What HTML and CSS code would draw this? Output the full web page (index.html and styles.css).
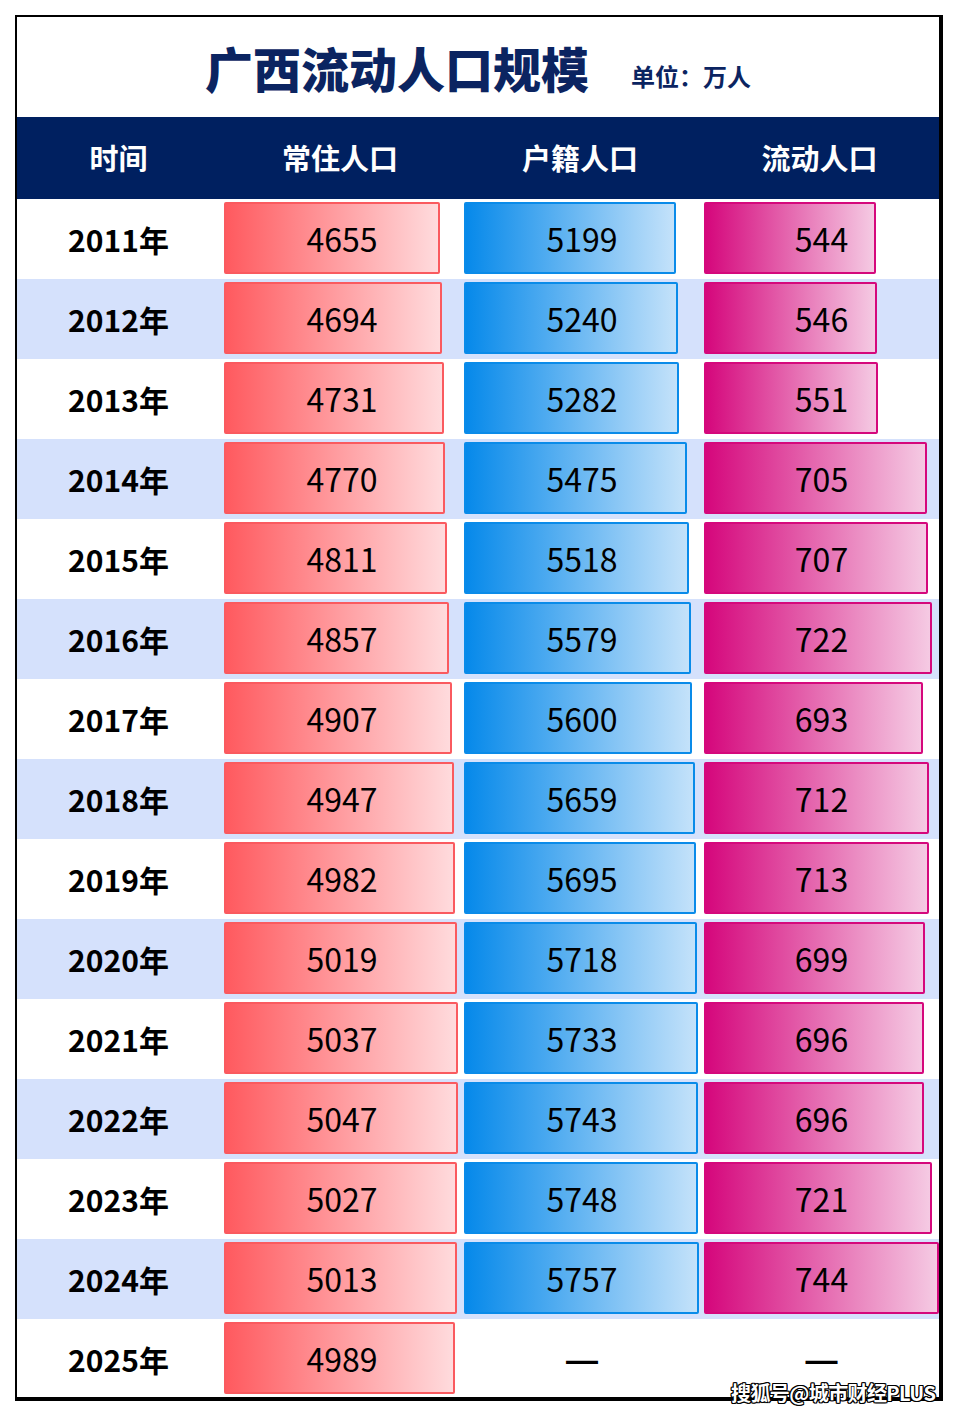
FILE: index.html
```html
<!DOCTYPE html>
<html lang="zh-CN">
<head>
<meta charset="utf-8">
<title>广西流动人口规模</title>
<link rel="stylesheet" href="styles.css">
</head>
<body>
<div class="page">
  <div class="frame">
    <div class="title-bar">
      <h1 class="title">广西流动人口规模</h1>
      <span class="unit">单位：万人</span>
    </div>
    <div class="row head">
      <div class="hcell">时间</div>
      <div class="hcell">常住人口</div>
      <div class="hcell">户籍人口</div>
      <div class="hcell">流动人口</div>
    </div>
    <div class="rows" id="rows"></div>
  </div>
  <div class="watermark">搜狐号@城市财经PLUS</div>
</div>
<script src="app.js"></script>
</body>
</html>
```

FILE: app.js
```javascript
const data = [
  [2011, 4655, 5199, 544],
  [2012, 4694, 5240, 546],
  [2013, 4731, 5282, 551],
  [2014, 4770, 5475, 705],
  [2015, 4811, 5518, 707],
  [2016, 4857, 5579, 722],
  [2017, 4907, 5600, 693],
  [2018, 4947, 5659, 712],
  [2019, 4982, 5695, 713],
  [2020, 5019, 5718, 699],
  [2021, 5037, 5733, 696],
  [2022, 5047, 5743, 696],
  [2023, 5027, 5748, 721],
  [2024, 5013, 5757, 744],
  [2025, 4989, null, null]
];
const scales = [216 / 4655, 212 / 5199, 172 / 544];
const kinds = ['red', 'blue', 'pink'];
const rows = document.getElementById('rows');
data.forEach((r, i) => {
  const row = document.createElement('div');
  row.className = 'row body' + (i % 2 === 1 ? ' alt' : '');
  const y = document.createElement('div');
  y.className = 'year';
  y.textContent = r[0] + '年';
  row.appendChild(y);
  for (let k = 0; k < 3; k++) {
    const cell = document.createElement('div');
    cell.className = 'cell';
    const v = r[k + 1];
    if (v !== null) {
      const bar = document.createElement('div');
      bar.className = 'bar ' + kinds[k];
      bar.style.width = Math.round(v * scales[k]) + 'px';
      cell.appendChild(bar);
    }
    const num = document.createElement('div');
    num.className = v === null ? 'num dash' : 'num';
    num.textContent = v === null ? '—' : String(v);
    cell.appendChild(num);
    row.appendChild(cell);
  }
  rows.appendChild(row);
});
```

FILE: styles.css
```css
* { box-sizing: border-box; }
html, body { margin: 0; padding: 0; background: #fff; }
body { font-family: "Noto Sans CJK SC", "Noto Sans", sans-serif; }

.page {
  position: relative;
  width: 958px;
  height: 1416px;
  padding: 15px 0 0 15px;
}

.frame {
  width: 928px;
  height: 1386px;
  border-style: solid;
  border-color: #000;
  border-width: 2px 4px 4px 2px;
  overflow: hidden;
  display: flex;
  flex-direction: column;
}

.title-bar {
  height: 100px;
  flex: none;
  display: flex;
  justify-content: center;
  align-items: baseline;
  padding-top: 20px;
  gap: 42px;
  color: #0b2461;
}
.title {
  margin: 0;
  font-size: 48px;
  line-height: 60px;
  font-weight: 900;
  letter-spacing: 0;
}
.unit {
  font-size: 24px;
  font-weight: 700;
  position: relative;
  top: -2px;
}

.row {
  display: grid;
  grid-template-columns: 203px 240px 240px 239px;
  flex: none;
}
.head {
  height: 82px;
  background: #002060;
}
.hcell {
  display: flex;
  align-items: center;
  justify-content: center;
  color: #fff;
  font-size: 29px;
  font-weight: 700;
  padding-bottom: 3px;
}

.rows { display: flex; flex-direction: column; }
.body { height: 80px; background: #fff; }
.body.alt { background: #d5e1fc; }

.year {
  display: flex;
  align-items: center;
  justify-content: center;
  font-size: 30px;
  font-weight: 700;
  color: #000;
}

.cell {
  display: grid;
  grid-template-columns: 100%;
  grid-template-rows: 80px;
  align-items: center;
}
.bar {
  grid-area: 1 / 1;
  justify-self: start;
  align-self: start;
  margin: 3px 0 0 4px;
  height: 72px;
  border: 2px solid;
  border-radius: 2px;
}
.bar.red {
  border-color: #fa5a5f;
  background: linear-gradient(to right, #ff5a5f, #ffdbdd);
}
.bar.blue {
  border-color: #0a8be9;
  background: linear-gradient(to right, #0689ea, #c4e2fa);
}
.bar.pink {
  border-color: #d5087c;
  background: linear-gradient(to right, #d5077c, #f5cae3);
}
.num {
  grid-area: 1 / 1;
  justify-self: center;
  font-size: 32px;
  font-weight: 400;
  color: #000;
  line-height: 1;
  position: relative;
  top: -1px;
  left: 2px;
}
.num.dash {
  font-family: "Liberation Sans", sans-serif;
  font-weight: 700;
  top: 1px;
}

.watermark {
  position: absolute;
  left: 731px;
  top: 1381px;
  font-size: 20px;
  font-weight: 700;
  line-height: 24px;
  color: #fff;
  letter-spacing: -0.6px;
  text-shadow: 1px 1px 0 #000, -1px -1px 0 #000, 1px -1px 0 #000, -1px 1px 0 #000, 0 1px 0 #000, 1px 0 0 #000, 0 -1px 0 #000, -1px 0 0 #000;
}
```
